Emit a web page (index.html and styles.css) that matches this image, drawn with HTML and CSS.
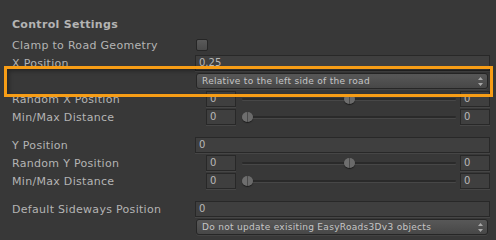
FILE: index.html
```html
<!DOCTYPE html>
<html lang="en">
  <head>
    <meta charset="UTF-8" />
    <title>Control Settings</title>
    <link rel="stylesheet" href="styles.css">
  </head>
  <body>
    <div class="inspector">
      <div class="section-title">Control Settings</div>

      <div class="row">
        <div class="label">Clamp to Road Geometry</div>
        <div class="value"><span class="checkbox"></span></div>
      </div>

      <div class="row">
        <div class="label">X Position</div>
        <div class="value"><div class="field">0.25</div></div>
      </div>

      <div class="row">
        <div class="label"></div>
        <div class="value">
          <div class="popup">
            <span>Relative to the left side of the road</span>
            <svg class="popup-arrows" width="5" height="9" viewBox="0 0 5 9">
              <path d="M2.5 0 L5 3 L0 3 Z M0 6 L5 6 L2.5 9 Z" fill="#a8a8a8" />
            </svg>
          </div>
        </div>
      </div>

      <div class="row">
        <div class="label">Random X Position</div>
        <div class="value minmax">
          <div class="field small">0</div>
          <div class="slider">
            <div class="track"></div>
            <div class="thumb" style="left: 47.5%"></div>
          </div>
          <div class="field small">0</div>
        </div>
      </div>

      <div class="row">
        <div class="label">Min/Max Distance</div>
        <div class="value minmax">
          <div class="field small">0</div>
          <div class="slider">
            <div class="track"></div>
            <div class="thumb" style="left: 0%"></div>
          </div>
          <div class="field small">0</div>
        </div>
      </div>

      <div class="row spaced">
        <div class="label">Y Position</div>
        <div class="value"><div class="field">0</div></div>
      </div>

      <div class="row">
        <div class="label">Random Y Position</div>
        <div class="value minmax">
          <div class="field small">0</div>
          <div class="slider">
            <div class="track"></div>
            <div class="thumb" style="left: 47.5%"></div>
          </div>
          <div class="field small">0</div>
        </div>
      </div>

      <div class="row">
        <div class="label">Min/Max Distance</div>
        <div class="value minmax">
          <div class="field small">0</div>
          <div class="slider">
            <div class="track"></div>
            <div class="thumb" style="left: 0%"></div>
          </div>
          <div class="field small">0</div>
        </div>
      </div>

      <div class="row spaced">
        <div class="label">Default Sideways Position</div>
        <div class="value"><div class="field">0</div></div>
      </div>

      <div class="row">
        <div class="label"></div>
        <div class="value">
          <div class="popup">
            <span>Do not update exisiting EasyRoads3Dv3 objects</span>
            <svg class="popup-arrows" width="5" height="9" viewBox="0 0 5 9">
              <path d="M2.5 0 L5 3 L0 3 Z M0 6 L5 6 L2.5 9 Z" fill="#a8a8a8" />
            </svg>
          </div>
        </div>
      </div>

      <!-- tutorial highlight over the position mode popup -->
      <div class="highlight"></div>
    </div>
  </body>
</html>
```

FILE: styles.css
```css
body {
  margin: 0;
  padding: 0;
  background: #383838;
  font-family: "DejaVu Sans", Verdana, sans-serif;
  font-size: 11px;
  letter-spacing: 0.3px;
  color: #b4b4b4;
}

.inspector {
  position: relative;
  width: 496px;
  height: 240px;
  padding: 16px 6px 0 12px;
  box-sizing: border-box;
}

.section-title {
  height: 18px;
  line-height: 18px;
  font-weight: bold;
  margin-bottom: 2px;
}

.row {
  display: flex;
  align-items: center;
  height: 18px;
}

.row.spaced {
  margin-top: 10px;
}

.label {
  width: 183px;
  flex-shrink: 0;
  white-space: nowrap;
}

.value {
  flex: 1;
  display: flex;
  align-items: center;
}

.checkbox {
  display: inline-block;
  width: 10px;
  height: 10px;
  margin-left: 1px;
  border: 1px solid #262626;
  border-radius: 2px;
  background: linear-gradient(#5a5a5a, #4a4a4a);
}

.field {
  flex: 1;
  height: 14px;
  line-height: 14px;
  padding: 0 3px;
  background: #3f3f3f;
  border: 1px solid #282828;
  box-shadow: 0 1px 0 rgba(255, 255, 255, 0.07);
  font-size: 10px;
  letter-spacing: 0;
  color: #b8b8b8;
}

.field.small {
  flex: 0 0 22px;
}

.minmax {
  padding-left: 11px;
}

.slider {
  position: relative;
  flex: 1;
  height: 14px;
  margin: 0 4px 0 6px;
}

.track {
  position: absolute;
  left: 0;
  right: 0;
  top: 6px;
  height: 2px;
  background: #2a2a2a;
  border-radius: 1px;
  box-shadow: 0 1px 0 rgba(255, 255, 255, 0.08);
}

.thumb {
  position: absolute;
  top: 2px;
  width: 11px;
  height: 10px;
  border-radius: 50%;
  background: linear-gradient(90deg, #6e6e6e 0, #6e6e6e 45%, #4a4a4a 45%, #4a4a4a 55%, #6a6a6a 55%);
  box-shadow: 0 1px 1px rgba(0, 0, 0, 0.5);
}

.popup {
  flex: 1;
  display: flex;
  justify-content: space-between;
  align-items: center;
  height: 14px;
  margin: 0 2px 0 1px;
  padding: 0 5px;
  border: 1px solid #262626;
  border-radius: 3px;
  background: linear-gradient(#585858, #474747);
  box-shadow: 0 1px 0 rgba(255, 255, 255, 0.06);
  font-size: 9px;
  letter-spacing: 0.3px;
  color: #c6c6c6;
  white-space: nowrap;
}

.popup-arrows {
  flex-shrink: 0;
  margin-right: -1px;
}

.highlight {
  position: absolute;
  left: 4px;
  top: 66px;
  width: 483px;
  height: 25px;
  border: 3px solid #f79d16;
  box-shadow: inset 2px 2px 4px rgba(0, 0, 0, 0.35);
  pointer-events: none;
}
```
